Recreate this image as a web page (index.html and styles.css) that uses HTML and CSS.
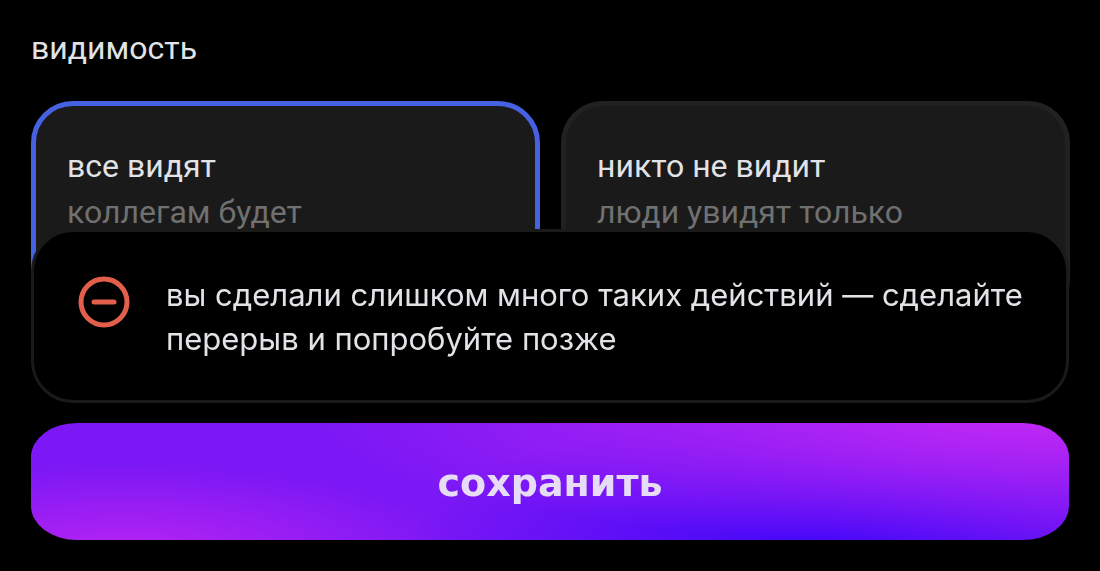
FILE: index.html
```
<!DOCTYPE html>
<html lang="ru">
<head>
    <meta charset="UTF-8">
    <meta name="viewport" content="width=device-width, initial-scale=1.0">
    <title>Видимость</title>
    <link rel="stylesheet" href="styles.css">
</head>
<body>

    <form class="settings">
        <fieldset class="visibility">
            <legend class="visibility-title">видимость</legend>

            <div class="options">
                <label class="option">
                    <input type="radio" name="visibility" value="all" checked>
                    <span class="option-title">все видят</span>
                    <span class="option-text">коллегам будет</span>
                </label>

                <label class="option">
                    <input type="radio" name="visibility" value="none">
                    <span class="option-title">никто не видит</span>
                    <span class="option-text">люди увидят только</span>
                </label>
            </div>
        </fieldset>

        <!-- Нижняя панель поверх содержимого -->
        <div class="bottom-bar">
            <div class="toast" role="alert">
                <svg class="toast-icon" viewBox="0 0 52 52" aria-hidden="true">
                    <circle cx="26" cy="26" r="23" />
                    <path d="M16 26h20" />
                </svg>
                <p class="toast-text">вы сделали слишком много таких действий — сделайте перерыв и попробуйте позже</p>
            </div>
            <button type="submit" class="save">сохранить</button>
        </div>
    </form>

</body>
</html>
```

FILE: styles.css
```
* {
    box-sizing: border-box;
}

body {
    margin: 0;
    background-color: #000;
    color: #e1e3e6;
    font-family: Roboto, sans-serif;
    font-size: 32px;
    line-height: 46px;
}

.visibility {
    margin: 0;
    padding: 25px 30px 0 31px;
    border: none;
}

.visibility-title {
    float: left;
    width: 100%;
    padding: 0;
    margin-bottom: 30px;
}

/* Карточки выбора */
.options {
    clear: both;
    display: grid;
    grid-template-columns: 1fr 1fr;
    gap: 21px;
}

.option {
    display: flex;
    flex-direction: column;
    min-height: 220px;
    padding: 37px 31px;
    background-color: #1a1a1a;
    border: 5px solid #212121;
    border-radius: 42px;
    cursor: pointer;
}

.option:has(input:checked) {
    border-color: #4662e2;
}

.option input {
    position: absolute;
    opacity: 0;
}

.option-text {
    color: #707070;
}

/* Нижняя панель */
.bottom-bar {
    position: fixed;
    left: 0;
    right: 0;
    bottom: 0;
    display: flex;
    flex-direction: column;
    gap: 20px;
    padding: 0 31px 31px;
}

.toast {
    display: flex;
    align-items: flex-start;
    gap: 36px;
    padding: 41px 36px 39px 44px;
    background-color: #000;
    border: 3px solid #1a1a1a;
    border-radius: 42px;
    font-family: Inter, sans-serif;
    font-size: 31px;
    line-height: 44px;
}

.toast-icon {
    flex: none;
    width: 52px;
    height: 52px;
    margin-top: 3px;
    fill: none;
    stroke: #e2604b;
    stroke-width: 5;
    stroke-linecap: round;
}

.toast-text {
    margin: 0;
}

.save {
    height: 117px;
    padding-top: 4px;
    border: none;
    border-radius: 46px / 34px;
    background-color: #7c18f5;
    background-image:
        radial-gradient(ellipse 32% 75% at 9% 112%, #b824f2, transparent),
        radial-gradient(ellipse 68% 115% at 96% -8%, #c229f4, transparent),
        radial-gradient(ellipse 40% 125% at 76% 112%, #4006f8, transparent);
    color: #e6dcf5;
    font-family: "DejaVu Sans", sans-serif;
    font-size: 38px;
    font-weight: bold;
    cursor: pointer;
}
```
